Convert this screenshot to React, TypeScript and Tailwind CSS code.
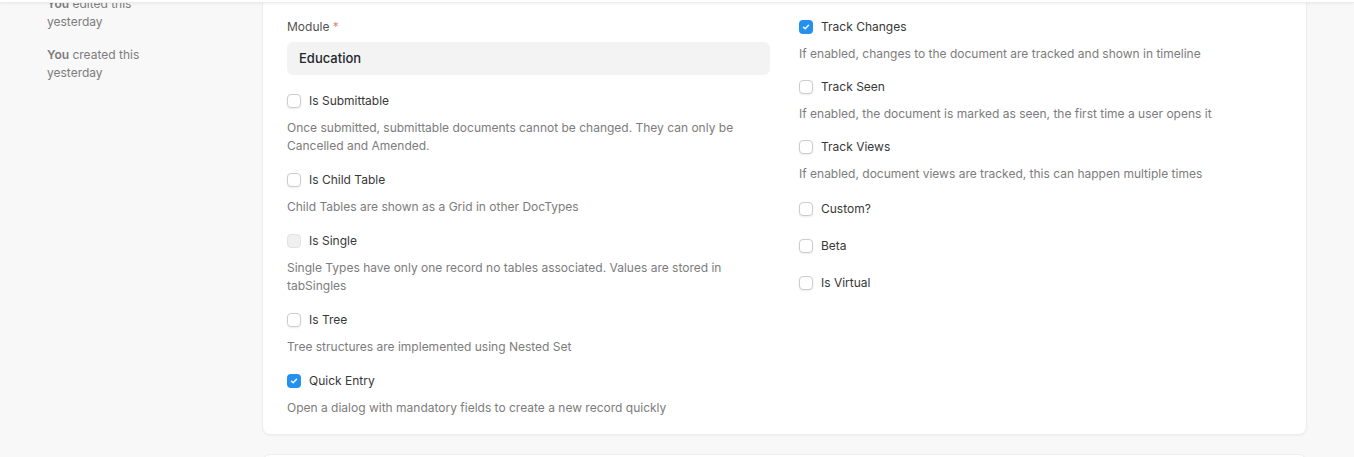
import { ReactNode } from "react"

type Field = {
  label: string
  checked?: boolean
  disabled?: boolean
  description?: string
  spacing?: string
}

const leftFields: Field[] = [
  {
    label: "Is Submittable",
    description:
      "Once submitted, submittable documents cannot be changed. They can only be Cancelled and Amended.",
  },
  { label: "Is Child Table", description: "Child Tables are shown as a Grid in other DocTypes" },
  {
    label: "Is Single",
    disabled: true,
    description: "Single Types have only one record no tables associated. Values are stored in tabSingles",
  },
  { label: "Is Tree", description: "Tree structures are implemented using Nested Set" },
  {
    label: "Quick Entry",
    checked: true,
    description: "Open a dialog with mandatory fields to create a new record quickly",
  },
]

const rightFields: Field[] = [
  {
    label: "Track Changes",
    checked: true,
    description: "If enabled, changes to the document are tracked and shown in timeline",
    spacing: "mb-[15px]",
  },
  {
    label: "Track Seen",
    description: "If enabled, the document is marked as seen, the first time a user opens it",
    spacing: "mb-[15px]",
  },
  {
    label: "Track Views",
    description: "If enabled, document views are tracked, this can happen multiple times",
    spacing: "mb-[17px]",
  },
  { label: "Custom?" },
  { label: "Beta" },
  { label: "Is Virtual" },
]

function Checkbox({ checked, disabled }: { checked?: boolean; disabled?: boolean }) {
  if (checked) {
    return (
      <span className="flex h-[14px] w-[14px] shrink-0 items-center justify-center rounded-[4px] bg-[#2490ef]">
        <svg width="8" height="8" viewBox="0 0 8 8" fill="none">
          <path d="M1.5 4.2 3.2 5.8 6.5 2.3" stroke="white" strokeWidth="1.4" strokeLinecap="round" strokeLinejoin="round" />
        </svg>
      </span>
    )
  }
  return (
    <span
      className={
        disabled
          ? "h-[14px] w-[14px] shrink-0 rounded-[4px] border border-[#e2e2e2] bg-[#f0f0f0]"
          : "h-[14px] w-[14px] shrink-0 rounded-[4px] border border-[#cdcdcd] bg-white shadow-[0_1px_2px_rgba(0,0,0,0.08)]"
      }
    />
  )
}

function CheckField({ field }: { field: Field }) {
  const mb = field.spacing ?? (field.description ? "mb-[16px]" : "mb-[19px]")
  return (
    <div className={mb}>
      <label className="flex h-[18px] items-center gap-2 text-[12px] text-[#383838]">
        <Checkbox checked={field.checked} disabled={field.disabled} />
        <span>{field.label}</span>
      </label>
      {field.description && (
        <p className="mt-[9px] text-[12px] leading-[18px] text-[#7c7c7c]">{field.description}</p>
      )}
    </div>
  )
}

function Card({ children, className }: { children?: ReactNode; className?: string }) {
  return (
    <div
      className={
        "rounded-lg border border-[#ededed] bg-white shadow-[0_1px_2px_rgba(0,0,0,0.04)] " + (className ?? "")
      }
    >
      {children}
    </div>
  )
}

export default function App() {
  return (
    <div className="relative h-[457px] overflow-hidden bg-[#f8f8f8] font-['Inter',sans-serif]">
      {/* navbar bottom edge, page is scrolled under it */}
      <div className="absolute inset-x-0 top-0 z-10 h-[3px] border-b border-[#ececec] bg-white shadow-[0_1px_3px_rgba(0,0,0,0.06)]" />

      <div className="-mt-[30px] flex pl-[47px] pr-[47px]">
        <aside className="w-[215px] shrink-0 pt-[25px] text-[12px] leading-[18px] text-[#7c7c7c]">
          <div className="flex w-[130px] flex-col gap-[15px]">
            <p>
              <span className="font-semibold">You</span> edited this yesterday
            </p>
            <p>
              <span className="font-semibold">You</span> created this yesterday
            </p>
          </div>
        </aside>

        <div className="flex-1">
          <Card className="px-6 pb-[1px] pt-[47px]">
            <div className="grid grid-cols-2 gap-x-[29px]">
              <div>
                <div className="mb-[17px]">
                  <div className="mb-[6px] text-[12px] leading-[18px] text-[#525252]">
                    Module <span className="text-[#f08080]">*</span>
                  </div>
                  <div className="flex h-[33px] items-center rounded-[6px] bg-[#f3f3f3] px-3 text-[13px] font-medium text-[#1f272e]">
                    Education
                  </div>
                </div>
                {leftFields.map((f) => (
                  <CheckField key={f.label} field={f} />
                ))}
              </div>
              <div>
                {rightFields.map((f) => (
                  <CheckField key={f.label} field={f} />
                ))}
              </div>
            </div>
          </Card>
          <Card className="mt-[19px] h-[200px]" />
        </div>
      </div>
    </div>
  )
}
